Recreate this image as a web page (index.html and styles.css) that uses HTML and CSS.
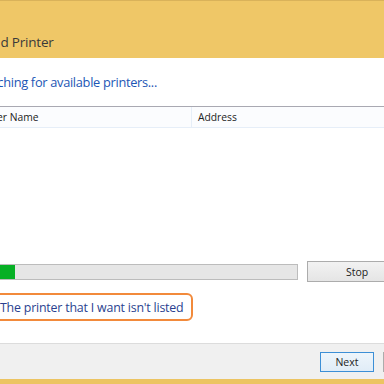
FILE: index.html
```html
<!DOCTYPE html>
<html lang="en">
<head>
    <meta charset="UTF-8">
    <title>Add Printer</title>
    <link rel="stylesheet" href="styles.css">
</head>
<body>
    <div class="window">
        <div class="titlebar">
            <span class="title">Add Printer</span>
        </div>

        <div class="content">
            <h1>Searching for available printers...</h1>

            <div class="list">
                <div class="list-header">
                    <div class="col col-name">Printer Name</div>
                    <div class="col col-address">Address</div>
                </div>
                <div class="list-body"></div>
            </div>

            <div class="search-row">
                <div class="progress">
                    <div class="progress-fill" style="width: 48px"></div>
                </div>
                <button class="btn btn-stop">Stop</button>
            </div>

            <div class="link-box">The printer that I want isn't listed</div>
        </div>

        <div class="footer">
            <button class="btn btn-next">Next</button>
            <button class="btn btn-cancel">Cancel</button>
        </div>
    </div>
</body>
</html>
```

FILE: styles.css
```css
* {
    margin: 0;
    padding: 0;
    box-sizing: border-box;
}

html, body {
    width: 384px;
    height: 384px;
    overflow: hidden;
}

body {
    font-family: "Open Sans", "Noto Sans", sans-serif;
    background: #ecc462;
}

.window {
    width: 520px;
    margin-left: -60px;
    background: #ffffff;
}

.titlebar {
    height: 58px;
    background: #efc767;
    border-top: 1px solid #d9b25a;
    padding-left: 44px;
    padding-top: 29px;
}

.title {
    font-size: 13.5px;
    color: #3a3a3a;
    letter-spacing: -0.2px;
}

.content {
    padding-left: 32px;
    padding-right: 40px;
    padding-top: 15px;
    height: 285px;
}

h1 {
    font-size: 12.8px;
    font-weight: normal;
    color: #1c56b5;
    letter-spacing: -0.3px;
    height: 33px;
}

.list {
    margin-left: -6px;
    border-top: 1px solid #a9a9b2;
}

.list-header {
    display: flex;
    height: 21px;
    background: #fbfcfe;
    border-bottom: 1px solid #e6eef8;
    font-size: 10.3px;
    color: #222;
}

.col {
    padding: 3px 6px 0;
}

.col-name {
    width: 226px;
    padding-left: 8px;
    border-right: 1px solid #e6eef8;
}

.list-body {
    height: 133px;
}

.search-row {
    display: flex;
    align-items: center;
    margin-left: -6px;
    gap: 9px;
}

.progress {
    width: 332px;
    height: 16px;
    border: 1px solid #bcbcbc;
    background: #e6e6e6;
}

.progress-fill {
    height: 100%;
    background: #06b025;
}

.btn {
    font-family: inherit;
    font-size: 10.5px;
    color: #222;
    background: linear-gradient(#f2f2f2, #e5e5e5);
    border: 1px solid #acacac;
}

.btn-stop {
    width: 100px;
    height: 21px;
}

.link-box {
    display: inline-block;
    margin-left: 20px;
    margin-top: 11px;
    padding: 4px 8px 3px 6px;
    border: 2px solid #f28a3b;
    border-radius: 6px;
    font-size: 12.4px;
    color: #2a3f8f;
    letter-spacing: -0.2px;
}

.footer {
    height: 36px;
    background: #f0f0f0;
    border-top: 1px solid #dcdcdc;
    display: flex;
    align-items: center;
    padding-left: 380px;
    gap: 9px;
}

.btn-next {
    width: 54px;
    height: 20px;
    border-color: #3c8fd6;
    background: linear-gradient(#eef5fb, #e0ecf7);
}

.btn-cancel {
    width: 54px;
    height: 20px;
}
```
